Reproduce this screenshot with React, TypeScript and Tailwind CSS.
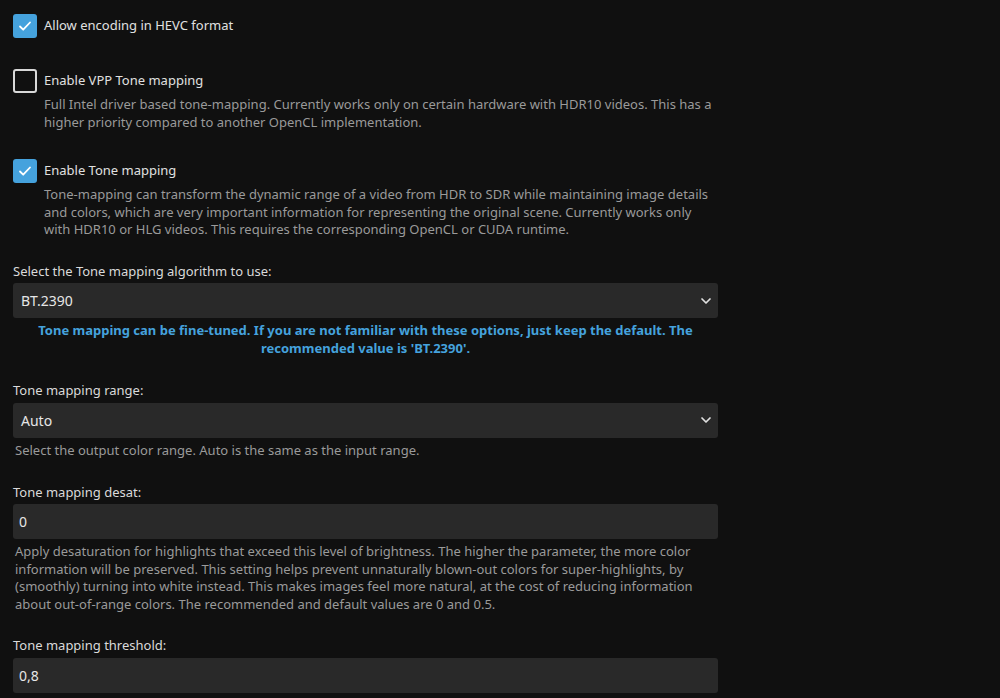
import { ChevronDown } from "lucide-react";

function Check({ checked }: { checked: boolean }) {
  return checked ? (
    <div className="w-6 h-6 rounded-[3px] bg-[#45a2dd] flex items-center justify-center shrink-0">
      <svg width="16" height="16" viewBox="0 0 16 16" fill="none">
        <path d="M3 8.5l3.2 3.2L13 4.5" stroke="white" strokeWidth="1.8" strokeLinecap="round" strokeLinejoin="round" />
      </svg>
    </div>
  ) : (
    <div className="w-6 h-6 rounded-[3px] border-2 border-[#d8d8d8] shrink-0" />
  );
}

function CheckRow({ checked, label, desc }: { checked: boolean; label: string; desc?: string }) {
  return (
    <div>
      <div className="flex items-center gap-[7px]">
        <Check checked={checked} />
        <span className="text-[13px] text-[#e0e0e0]">{label}</span>
      </div>
      {desc && <p className="ml-[31px] mt-[3px] text-[13px] leading-[17.6px] text-[#9a9a9a]">{desc}</p>}
    </div>
  );
}

function Select({ value }: { value: string }) {
  return (
    <div className="h-[35px] rounded-[3px] bg-[#292929] flex items-center justify-between pl-2 pr-[4px] text-[14px] text-[#e6e6e6]">
      <span>{value}</span>
      <ChevronDown size={16} strokeWidth={2.6} className="text-[#e0e0e0]" />
    </div>
  );
}

function Input({ value }: { value: string }) {
  return (
    <div className="h-[35px] rounded-[3px] bg-[#292929] flex items-center pl-[6px] text-[14px] text-[#e6e6e6]">
      {value}
    </div>
  );
}

function Label({ children }: { children: string }) {
  return <div className="text-[13px] text-[#dadada] mb-[2px]">{children}</div>;
}

export default function App() {
  return (
    <div className="h-[698px] bg-[#101010] px-[13px] pt-[14px] font-['Noto_Sans',sans-serif] overflow-hidden">
      <div className="w-[705px]">
        <CheckRow checked label="Allow encoding in HEVC format" />
        <div className="mt-[31px]">
          <CheckRow
            checked={false}
            label="Enable VPP Tone mapping"
            desc="Full Intel driver based tone-mapping. Currently works only on certain hardware with HDR10 videos. This has a higher priority compared to another OpenCL implementation."
          />
        </div>
        <div className="mt-[28px]">
          <CheckRow
            checked
            label="Enable Tone mapping"
            desc="Tone-mapping can transform the dynamic range of a video from HDR to SDR while maintaining image details and colors, which are very important information for representing the original scene. Currently works only with HDR10 or HLG videos. This requires the corresponding OpenCL or CUDA runtime."
          />
        </div>
        <div className="mt-[23px]">
          <Label>Select the Tone mapping algorithm to use:</Label>
          <Select value="BT.2390" />
          <p className="mt-[4px] text-center font-bold text-[13px] leading-[17.5px] text-[#45a2dd] px-4">
            Tone mapping can be fine-tuned. If you are not familiar with these options, just keep the default. The recommended value is 'BT.2390'.
          </p>
        </div>
        <div className="mt-[24px]">
          <Label>Tone mapping range:</Label>
          <Select value="Auto" />
          <p className="mt-[4px] ml-[2px] text-[13px] leading-[17.6px] text-[#9a9a9a]">
            Select the output color range. Auto is the same as the input range.
          </p>
        </div>
        <div className="mt-[23px]">
          <Label>Tone mapping desat:</Label>
          <Input value="0" />
          <p className="mt-[4px] ml-[2px] text-[13px] leading-[17.6px] text-[#9a9a9a]">
            Apply desaturation for highlights that exceed this level of brightness. The higher the parameter, the more color information will be preserved. This setting helps prevent unnaturally blown-out colors for super-highlights, by (smoothly) turning into white instead. This makes images feel more natural, at the cost of reducing information about out-of-range colors. The recommended and default values are 0 and 0.5.
          </p>
        </div>
        <div className="mt-[23px]">
          <Label>Tone mapping threshold:</Label>
          <Input value="0,8" />
        </div>
      </div>
    </div>
  );
}
